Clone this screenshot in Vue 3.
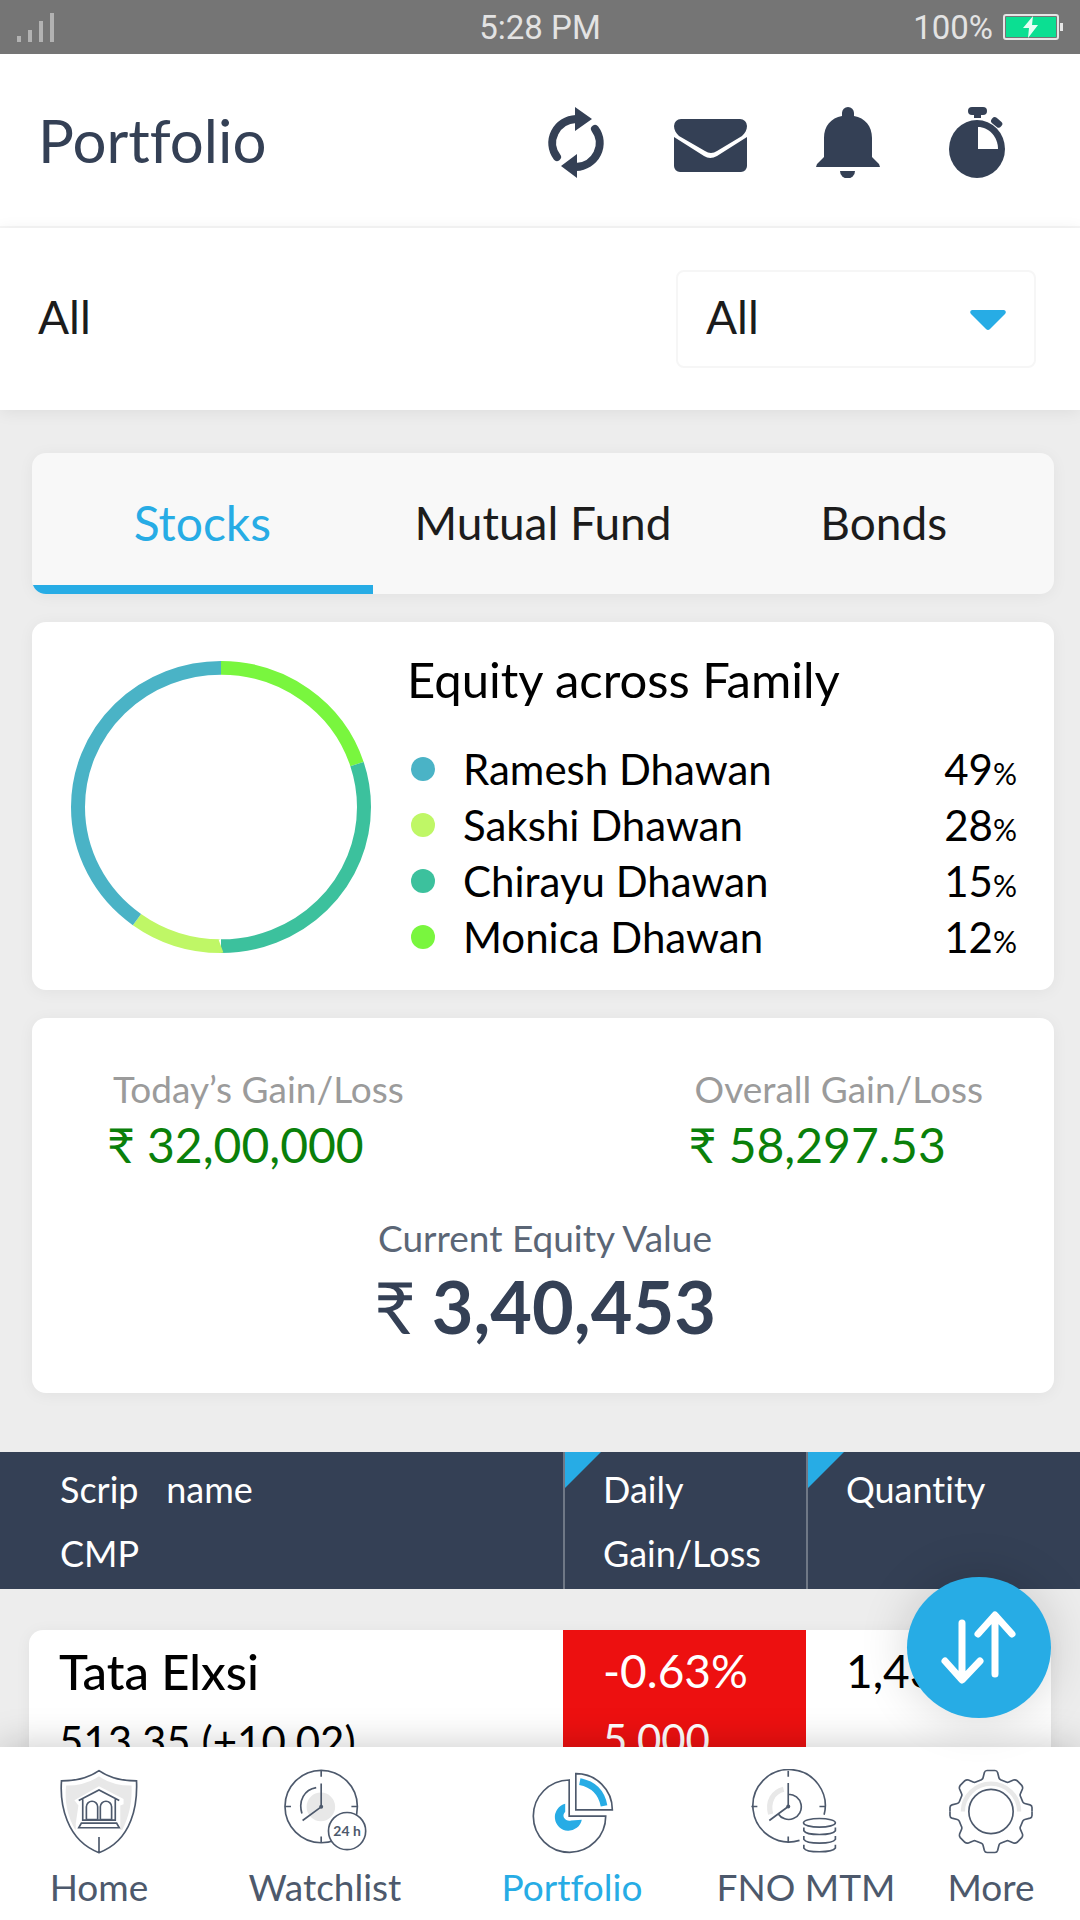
<script setup>
import { ref } from 'vue'

const account = ref('All')
const tabs = ['Stocks', 'Mutual Fund', 'Bonds']
const activeTab = ref('Stocks')

const members = [
  { name: 'Ramesh Dhawan', share: 49, color: '#4ab3c6' },
  { name: 'Sakshi Dhawan', share: 28, color: '#bff766' },
  { name: 'Chirayu Dhawan', share: 15, color: '#3cc19d' },
  { name: 'Monica Dhawan', share: 12, color: '#79f63e' },
]

const segments = [
  { start: 0, length: 20, color: '#79f63e' },
  { start: 20, length: 30, color: '#3cc19d' },
  { start: 50, length: 10, color: '#bff766' },
  { start: 60, length: 40, color: '#4ab3c6' },
]

const gearQuarter =
  'M0-124H12Q18-124 20-118L24-102Q25-98 29-96L46-89Q50-87 54-89L68-95Q74-97 79-93L93-79Q97-74 95-68L89-54Q87-50 89-46L96-29Q98-25 102-24L118-20Q124-18 124-12V0'
</script>

<template>
  <div class="app">
    <div class="status">
      <svg class="signal" viewBox="0 0 38 29" width="38" height="29" aria-hidden="true">
        <path d="M0 23h4v6H0zM11 17h4v12h-4zM22 8h4v21h-4zM33 0h4v29h-4z" fill="#b2b2b2" />
      </svg>
      <span class="time">5:28 PM</span>
      <span class="power">
        100%
        <svg viewBox="0 0 60 26" width="60" height="26" aria-hidden="true">
          <rect x="1" y="1" width="54" height="24" rx="2" fill="none" stroke="#e6e6e6" stroke-width="2" />
          <rect x="3" y="3" width="50" height="20" fill="#0bdf92" />
          <path d="M57 9h3v8h-3z" fill="#e6e6e6" />
          <path d="M30 2 20 14h6l-1 10 10-13h-6z" fill="#e6fff5" />
        </svg>
      </span>
    </div>

    <header class="topbar">
      <h1>Portfolio</h1>
      <div class="actions">
        <button type="button" aria-label="Refresh">
          <svg viewBox="0 0 58 71" width="58" height="71">
            <g fill="none" stroke="#344055" stroke-width="8" stroke-linecap="round">
              <path d="M29 12A25 24 0 0 0 10 50" />
              <path d="M29 60A25 24 0 0 0 48 22" />
            </g>
            <path d="M28 0 45 12 28 24zM30 47 14 59 30 71z" fill="#344055" />
          </svg>
        </button>
        <button type="button" aria-label="Messages">
          <svg viewBox="0 -12 73 71" width="73" height="71">
            <g fill="#344055">
              <path d="M7 0H66a7 7 0 0 1 7 7c0 4-2 7-5 10L43 32q-6 4-12 0L5 17C2 14 0 11 0 7a7 7 0 0 1 7-7z" />
              <path d="M0 18 30 37q6 4 13 0L73 18V47a6 6 0 0 1-6 6H6a6 6 0 0 1-6-6z" />
            </g>
          </svg>
        </button>
        <button type="button" aria-label="Notifications">
          <svg viewBox="0 0 64 71" width="64" height="71">
            <g fill="#344055">
              <path d="M26 9V6a6 6 0 0 1 12 0v3C49 11 56 19 56 31v19l7 7 1 3H0l1-3 7-7V31C8 19 15 11 26 9z" />
              <path d="M24 64h15a7 7 0 0 1-15 0z" />
            </g>
          </svg>
        </button>
        <button type="button" aria-label="Timer">
          <svg viewBox="0 0 57 71" width="57" height="71">
            <ellipse cx="28" cy="42" rx="28" ry="29" fill="#344055" />
            <path d="M29 42V20C40 20 49 30 49 42z" fill="#fff" />
            <g fill="#344055">
              <rect x="19" y="0" width="19" height="8" rx="4" />
              <path d="M25 7h7v4h-7z" />
              <rect x="42" y="12" width="12" height="7" rx="3" transform="rotate(40 48 15)" />
            </g>
          </svg>
        </button>
      </div>
    </header>

    <section class="filter">
      <label for="account">All</label>
      <div class="picker">
        <select id="account" v-model="account">
          <option>All</option>
        </select>
        <svg class="caret" viewBox="0 0 36 20" width="36" height="20" aria-hidden="true">
          <path d="M2 0H34Q37 1 35 4L20 19Q18 21 16 19L1 4Q-1 1 2 0z" fill="#27ace5" />
        </svg>
      </div>
    </section>

    <main class="content">
      <div class="tabs" role="tablist">
        <button
          v-for="tab in tabs"
          :key="tab"
          type="button"
          role="tab"
          :aria-selected="tab === activeTab"
          :class="{ active: tab === activeTab }"
          @click="activeTab = tab"
        >
          {{ tab }}
        </button>
      </div>

      <section class="card family">
        <svg class="donut" viewBox="0 0 300 300" preserveAspectRatio="none" aria-hidden="true">
          <g transform="rotate(-90 150 150)" fill="none" stroke-width="14">
            <circle
              v-for="s in segments"
              :key="s.start"
              cx="150"
              cy="150"
              r="143"
              pathLength="100"
              :stroke="s.color"
              :stroke-dasharray="`${s.length} ${100 - s.length}`"
              :stroke-dashoffset="-s.start"
            />
          </g>
        </svg>
        <div class="breakdown">
          <h2>Equity across Family</h2>
          <ul>
            <li v-for="m in members" :key="m.name">
              <span class="dot" :style="{ background: m.color }"></span>
              <span class="name">{{ m.name }}</span>
              <span class="share">{{ m.share }}<small>%</small></span>
            </li>
          </ul>
        </div>
      </section>

      <section class="card summary">
        <div class="stats">
          <div>
            <p class="label">Today’s Gain/Loss</p>
            <p class="gain">₹ 32,00,000</p>
          </div>
          <div>
            <p class="label">Overall Gain/Loss</p>
            <p class="gain">₹ 58,297.53</p>
          </div>
        </div>
        <p class="label current">Current Equity Value</p>
        <p class="total"><span class="rupee">₹</span>3,40,453</p>
      </section>

      <table class="holdings">
        <thead>
          <tr>
            <th scope="col">Scrip&nbsp;&nbsp; name<br />CMP</th>
            <th scope="col" class="sortable">Daily<br />Gain/Loss</th>
            <th scope="col" class="sortable">Quantity</th>
          </tr>
        </thead>
        <tbody>
          <tr>
            <td><strong>Tata Elxsi</strong><span>513.35 (+10.02)</span></td>
            <td class="loss">-0.63%<span>5,000</span></td>
            <td>1,435</td>
          </tr>
        </tbody>
      </table>
    </main>

    <button type="button" class="fab" aria-label="Sort">
      <svg viewBox="0 0 144 141" width="144" height="141">
        <g fill="none" stroke="#fff" stroke-width="7" stroke-linecap="round" stroke-linejoin="round">
          <path d="M55 46V102M38 84 55 103 73 84" />
          <path d="M88 97V39M71 57 88 38 105 57" />
        </g>
      </svg>
    </button>

    <nav class="bottom">
      <a href="#home">
        <svg viewBox="185 86 234 256" width="78" height="85" aria-hidden="true">
          <path d="M302 108Q340 136 400 136C402 180 395 225 372 270L230 268C205 225 198 180 203 136Q262 136 302 108z" fill="#e8e8e8" />
          <path d="M302 138 376 176V192L366 196V276L345 325H250L232 270V250L240 196 228 180z" fill="#fff" />
          <g class="line">
            <path d="M302 91Q346 122 415 122C418 190 404 300 302 338C202 300 184 190 189 122Q258 122 302 91zM302 291V338" />
            <path d="M241 181 302 149 363 181M253 177V240H351V177M264 238V200a17 17 0 0 1 34 0V238zM306 238V200a17 17 0 0 1 34 0V238zM249 249H355L363 263H241z" />
          </g>
        </svg>
        Home
      </a>
      <a href="#watchlist">
        <svg viewBox="850 86 256 256" width="85" height="85" aria-hidden="true">
          <circle cx="964" cy="200" r="43" fill="#e8e8e8" />
          <g class="line">
            <circle cx="965" cy="199" r="109" />
            <path d="M965 91V109M965 289V307M856 199H874M1056 199H1074M965 130V200L909 241M907 220C895 180 915 148 950 142" />
            <circle cx="1043" cy="273" r="56" fill="#fff" />
          </g>
          <circle cx="965" cy="200" r="6" fill="#4d596c" />
          <text x="1043" y="288" text-anchor="middle" font-size="42" font-weight="700" fill="#4d596c">24 h</text>
        </svg>
        Watchlist
      </a>
      <a href="#portfolio" class="current-page">
        <svg viewBox="390 86 256 256" width="85" height="85" aria-hidden="true">
          <g class="line">
            <path d="M508 119A109 109 0 1 0 618 228H508zM528 100V209H638A109 109 0 0 0 528 100z" />
          </g>
          <path d="M540 124Q602 136 613 197" fill="none" stroke="#27ace5" stroke-width="20" />
          <path d="M496 191V215Q488 224 492 232Q500 244 514 241L546 239A41 41 0 1 1 496 191z" fill="#27ace5" />
        </svg>
        Portfolio
      </a>
      <a href="#fno-mtm">
        <svg viewBox="150 86 340 256" width="113" height="85" aria-hidden="true">
          <path d="M212 222C202 183 220 155 251 147" fill="none" stroke="#e8e8e8" stroke-width="16" />
          <g class="line">
            <path d="M373 224A109 109 0 1 0 299 301" />
            <path d="M265 91V109M265 289V307M154 199H172M359 199H377M265 128V199L208 241M265 162A38 38 0 1 1 234 220" />
            <ellipse cx="359" cy="248" rx="48" ry="13" />
            <path d="M312 262V272C320 287 398 287 407 272V262M312 288V298C320 313 398 313 407 298V288M312 314V324C320 339 398 339 407 324V314" />
          </g>
          <circle cx="265" cy="199" r="6" fill="#4d596c" />
        </svg>
        FNO MTM
      </a>
      <a href="#more">
        <svg viewBox="745 86 260 256" width="86" height="85" aria-hidden="true">
          <path d="M790 214A85 84 0 0 1 960 214" fill="none" stroke="#e8e8e8" stroke-width="13" />
          <g class="line" transform="translate(875 214)">
            <circle r="67" />
            <path v-for="a in [0, 90, 180, 270]" :key="a" :d="gearQuarter" :transform="`rotate(${a})`" />
          </g>
        </svg>
        More
      </a>
    </nav>
  </div>
</template>

<style>
body {
  margin: 0;
}
</style>

<style scoped>
.app {
  position: relative;
  display: flex;
  flex-direction: column;
  height: 100vh;
  overflow: hidden;
  background: #ededed;
  color: #1c1c1c;
  font-family: Lato, 'Liberation Sans', sans-serif;
  font-size: 46px;
  font-variant-ligatures: none;
}

button,
select {
  font: inherit;
  font-variant-ligatures: none;
  color: inherit;
  border: 0;
  background: none;
  cursor: pointer;
}

h1,
h2,
p,
ul {
  margin: 0;
  padding: 0;
  font-weight: 400;
}

.status {
  display: grid;
  grid-template-columns: 1fr auto 1fr;
  align-items: center;
  flex: none;
  height: 54px;
  padding: 0 17px;
  background: #757575;
  color: #e3e3e3;
  font-family: Roboto, sans-serif;
  font-size: 33px;
}

.power {
  display: flex;
  justify-content: flex-end;
  align-items: center;
  gap: 10px;
}

.topbar {
  display: flex;
  justify-content: space-between;
  align-items: center;
  flex: none;
  height: 172px;
  padding: 0 74px 0 38px;
  background: #fff;
  border-bottom: 2px solid #f6f6f6;
}

h1 {
  color: #344055;
  font-size: 60px;
}

.actions {
  display: flex;
  align-items: center;
  gap: 69px;
  padding-top: 4px;
}

.actions button {
  display: flex;
  padding: 0;
}

.filter {
  z-index: 1;
  display: flex;
  justify-content: space-between;
  align-items: center;
  flex: none;
  height: 182px;
  padding: 0 44px 0 38px;
  background: #fff;
  box-shadow: 0 2px 16px rgba(0, 0, 0, 0.07);
}

.filter label {
  padding-bottom: 6px;
}

.picker {
  position: relative;
  width: 360px;
}

.picker select {
  width: 100%;
  height: 98px;
  padding: 0 28px 6px;
  border: 2px solid #f6f6f6;
  border-radius: 8px;
  appearance: none;
}

.caret {
  position: absolute;
  top: 40px;
  right: 30px;
  pointer-events: none;
}

.content {
  flex: 1;
  min-height: 0;
  padding-top: 43px;
  overflow-y: auto;
  scrollbar-width: none;
}

.tabs,
.card {
  margin: 0 26px 28px 32px;
  border-radius: 14px;
  box-shadow: 0 2px 16px rgba(0, 0, 0, 0.05);
}

.tabs {
  display: grid;
  grid-template-columns: repeat(3, 1fr);
  height: 141px;
  background: #f8f8f8;
  overflow: hidden;
}

.tabs button {
  padding: 0 0 2px;
  border-top: 9px solid transparent;
  border-bottom: 9px solid transparent;
}

.tabs .active {
  border-bottom-color: #27ace5;
  color: #27ace5;
  font-size: 48px;
}

.card {
  background: #fff;
}

.family {
  display: flex;
  align-items: center;
  gap: 36px;
  padding: 27px 37px 25px 39px;
}

.donut {
  flex: none;
  width: 300px;
  height: 292px;
}

.breakdown {
  flex: 1;
  color: #000;
}

h2 {
  margin-bottom: 32px;
  font-size: 49px;
  line-height: 60px;
}

li {
  display: flex;
  align-items: center;
  height: 56px;
  line-height: 56px;
  font-size: 42px;
}

.dot {
  width: 24px;
  height: 24px;
  margin: 0 28px 0 4px;
  border-radius: 50%;
}

.share {
  margin-left: auto;
}

small {
  font-size: 30px;
  line-height: 1;
}

.summary {
  padding: 49px 71px 45px 75px;
}

.stats {
  display: flex;
  justify-content: space-between;
  margin-bottom: 41px;
}

.label {
  margin-bottom: 4px;
  color: #9b9b9b;
  font-size: 37px;
  line-height: 44px;
}

.stats .label {
  padding-left: 6px;
}

.gain {
  color: #0a800a;
  font-size: 48px;
  line-height: 60px;
}

.current {
  color: #5b6676;
  text-align: center;
}

.total {
  color: #344055;
  font-size: 72px;
  font-weight: 700;
  line-height: 84px;
  text-align: center;
}

.rupee {
  margin-right: 16px;
  font-weight: 400;
}

.holdings,
.holdings thead,
.holdings tbody {
  display: block;
}

.holdings tr {
  display: grid;
  grid-template-columns: 1fr 243px 274px;
}

.holdings {
  margin-top: 59px;
}

.holdings thead tr {
  height: 137px;
  background: #344055;
  color: #fff;
}

th {
  position: relative;
  padding: 5px 0 0 38px;
  font-size: 36px;
  font-weight: 400;
  line-height: 64px;
  text-align: left;
}

th:first-child {
  padding-left: 60px;
}

.sortable {
  border-left: 2px solid #6f7886;
}

.sortable::before {
  content: '';
  position: absolute;
  top: 0;
  left: 0;
  border-top: 36px solid #27ace5;
  border-right: 36px solid transparent;
}

.holdings tbody tr {
  grid-template-columns: 1fr 243px 245px;
  margin: 41px 29px 0;
  border-radius: 14px;
  background: #fff;
  box-shadow: 0 2px 16px rgba(0, 0, 0, 0.05);
}

td {
  padding: 7px 0 16px 40px;
  color: #000;
  line-height: 68px;
}

td:first-child {
  padding-left: 30px;
}

td strong {
  font-size: 49px;
  font-weight: 500;
}

td span {
  display: block;
  font-size: 42px;
}

.loss {
  background: #ed1010;
  color: #fff;
}

.fab {
  position: absolute;
  right: 29px;
  bottom: 202px;
  z-index: 3;
  width: 144px;
  height: 141px;
  padding: 0;
  border-radius: 50%;
  background: #27ace5;
  box-shadow: 0 0 50px rgba(0, 0, 0, 0.16);
}

.fab svg {
  display: block;
}

.bottom {
  z-index: 2;
  display: grid;
  grid-template-columns: 198fr 254fr 240fr 228fr 142fr;
  flex: none;
  padding: 22px 18px 11px 0;
  background: #fff;
  box-shadow: 0 0 36px rgba(0, 0, 0, 0.22);
}

.bottom a {
  display: flex;
  flex-direction: column;
  align-items: center;
  gap: 11px;
  color: #4d596c;
  font-size: 37px;
  line-height: 44px;
  text-decoration: none;
  white-space: nowrap;
}

.bottom .current-page {
  color: #27ace5;
}

.line {
  fill: none;
  stroke: #4d596c;
  stroke-width: 5;
}
</style>
